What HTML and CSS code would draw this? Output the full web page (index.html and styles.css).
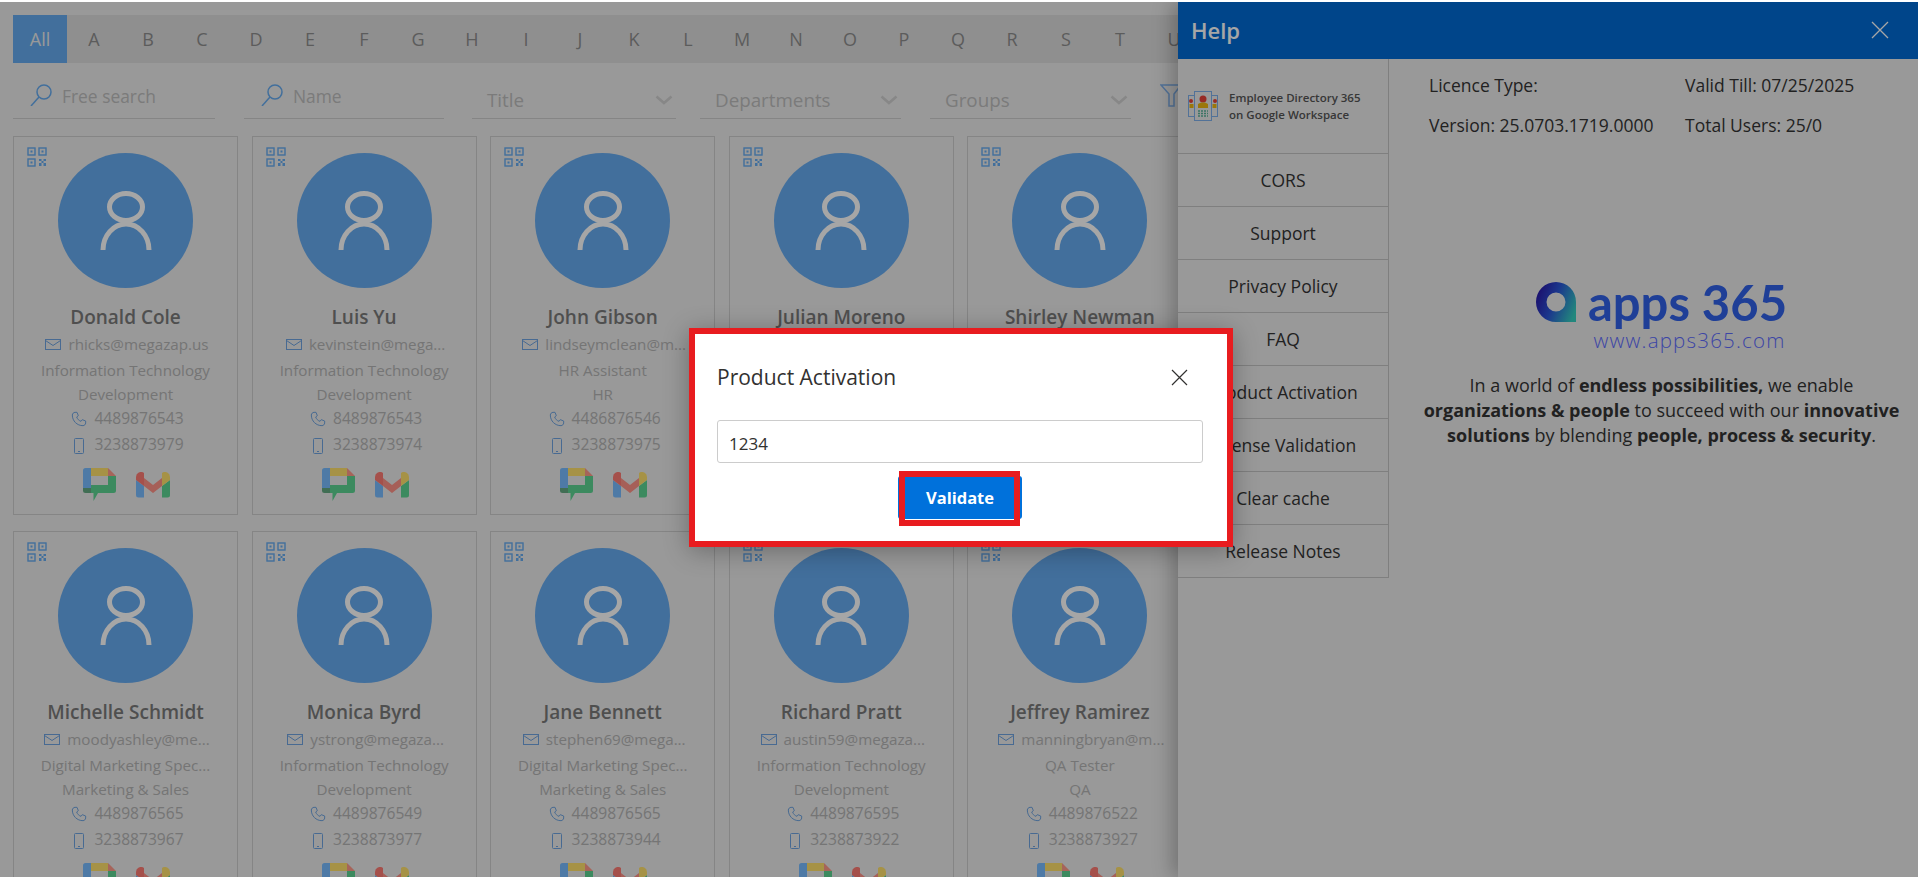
FILE: index.html
```html
<!DOCTYPE html>
<html lang="en">
<head>
  <meta charset="UTF-8">
  <title>Employee Directory 365</title>
  <link rel="stylesheet" href="styles.css">
</head>
<body>
  <svg class="sprites" width="0" height="0">
    <symbol id="i-qr" viewBox="0 0 20 20">
      <g fill="none" stroke="currentColor" stroke-width="1.4">
        <rect x="1" y="1" width="7" height="7"/><rect x="12" y="1" width="7" height="7"/><rect x="1" y="12" width="7" height="7"/>
      </g>
      <g fill="currentColor">
        <rect x="3.5" y="3.5" width="2" height="2"/><rect x="14.5" y="3.5" width="2" height="2"/><rect x="3.5" y="14.5" width="2" height="2"/>
        <path d="M12 12h2.500v2H12zM16.500 12H19v2h-2.500zM14.500 14h2v2h-2zM12 16h2.500v3H12zM16.500 16H19v3h-2.500z"/>
      </g>
    </symbol>
    <symbol id="i-person" viewBox="0 0 52 59">
      <g fill="none" stroke="currentColor" stroke-width="5">
        <ellipse cx="26" cy="16" rx="16.500" ry="13.500"/>
        <path d="M3 59A23 26 0 0 1 49 59"/>
      </g>
    </symbol>
    <symbol id="i-mail" viewBox="0 0 16 11">
      <g fill="none" stroke="currentColor" stroke-width="1">
        <rect x=".5" y=".5" width="15" height="10"/><path d="M.5 1.500 8 6.500l7.500-5"/>
      </g>
    </symbol>
    <symbol id="i-phone" viewBox="0 0 24 24">
      <path fill="none" stroke="currentColor" stroke-width="1.500" d="M6 2h3l2 5-2.500 2c1 3 3.500 5.500 6.500 6.500l2-2.500 5 2v3c0 2-2 4-4 4C9 22 2 15 2 6c0-2 2-4 4-4z"/>
    </symbol>
    <symbol id="i-mobile" viewBox="0 0 10 16">
      <rect x=".5" y=".5" width="9" height="15" rx="1" fill="none" stroke="currentColor"/>
      <rect x="4" y="13" width="2" height="1" fill="currentColor"/>
    </symbol>
    <symbol id="i-chat" viewBox="0 0 33 33">
      <path fill="#78bcff" d="M2.500 0H8v20H0V2.500A2.500 2.500 0 0 1 2.500 0z"/>
      <path fill="#ffe16c" d="M8 0h17v8H8z"/>
      <path fill="#ff9a8a" d="M25 0l8 8h-8z"/>
      <path fill="#5cd492" d="M25 8h8v14.500a2.500 2.500 0 0 1-2.500 2.500H15l-4.500 8v-8H8v-8h17z"/>
      <path fill="#64aa82" d="M0 20h8v5H2.500A2.500 2.500 0 0 1 0 22.500z"/>
    </symbol>
    <symbol id="i-gmail" viewBox="0 0 34 26">
      <path fill="#78bcff" d="M0 8l8 6v11.500H2.500A2.500 2.500 0 0 1 0 23z"/>
      <path fill="#5cd492" d="M26 14l8-6v15a2.500 2.500 0 0 1-2.500 2.500H26z"/>
      <path fill="#ff9287" d="M8 6l9 7 9-7v8l-9 7-9-7z"/>
      <path fill="#fe7b73" d="M0 5a5 5 0 0 1 8-4v13L0 8z"/>
      <path fill="#ffe16c" d="M26 1a5 5 0 0 1 8 4v3l-8 6z"/>
    </symbol>
  </svg>

  <div class="screen">
    <div class="directory">
      <nav class="alpha-bar">
        <a class="alpha-all">All</a><a>A</a><a>B</a><a>C</a><a>D</a><a>E</a><a>F</a><a>G</a><a>H</a><a>I</a><a>J</a><a>K</a><a>L</a><a>M</a><a>N</a><a>O</a><a>P</a><a>Q</a><a>R</a><a>S</a><a>T</a><a>U</a>
      </nav>

      <div class="filters">
        <div class="field search-field">
          <svg class="search-icon" viewBox="0 0 22 22"><circle cx="14" cy="8" r="7" fill="none" stroke="currentColor" stroke-width="1.500"/><path d="M9 13 1 22" stroke="currentColor" stroke-width="1.500"/></svg>
          <span>Free search</span>
        </div>
        <div class="field search-field">
          <svg class="search-icon" viewBox="0 0 22 22"><circle cx="14" cy="8" r="7" fill="none" stroke="currentColor" stroke-width="1.500"/><path d="M9 13 1 22" stroke="currentColor" stroke-width="1.500"/></svg>
          <span>Name</span>
        </div>
        <div class="field select-field"><span>Title</span><svg class="chevron" viewBox="0 0 18 10"><path d="M1.500 1.500 9 8l7.500-6.500" fill="none" stroke="currentColor" stroke-width="2.500"/></svg></div>
        <div class="field select-field"><span>Departments</span><svg class="chevron" viewBox="0 0 18 10"><path d="M1.500 1.500 9 8l7.500-6.500" fill="none" stroke="currentColor" stroke-width="2.500"/></svg></div>
        <div class="field select-field"><span>Groups</span><svg class="chevron" viewBox="0 0 18 10"><path d="M1.500 1.500 9 8l7.500-6.500" fill="none" stroke="currentColor" stroke-width="2.500"/></svg></div>
        <svg class="filter-icon" viewBox="0 0 22 24"><path d="M1 1h20l-7 9v12H9V10z" fill="none" stroke="currentColor" stroke-width="1.500"/></svg>
      </div>

      <div class="cards">
        <article class="card">
          <svg class="qr"><use href="#i-qr"/></svg>
          <div class="avatar"><svg><use href="#i-person"/></svg></div>
          <h3>Donald Cole</h3>
          <p class="email"><svg><use href="#i-mail"/></svg>rhicks@megazap.us</p>
          <p>Information Technology</p>
          <p>Development</p>
          <p class="tel"><svg><use href="#i-phone"/></svg>4489876543</p>
          <p class="tel mobile"><svg><use href="#i-mobile"/></svg>3238873979</p>
          <div class="apps"><svg class="chat"><use href="#i-chat"/></svg><svg class="gmail"><use href="#i-gmail"/></svg></div>
        </article>
        <article class="card">
          <svg class="qr"><use href="#i-qr"/></svg>
          <div class="avatar"><svg><use href="#i-person"/></svg></div>
          <h3>Luis Yu</h3>
          <p class="email"><svg><use href="#i-mail"/></svg>kevinstein@mega...</p>
          <p>Information Technology</p>
          <p>Development</p>
          <p class="tel"><svg><use href="#i-phone"/></svg>8489876543</p>
          <p class="tel mobile"><svg><use href="#i-mobile"/></svg>3238873974</p>
          <div class="apps"><svg class="chat"><use href="#i-chat"/></svg><svg class="gmail"><use href="#i-gmail"/></svg></div>
        </article>
        <article class="card">
          <svg class="qr"><use href="#i-qr"/></svg>
          <div class="avatar"><svg><use href="#i-person"/></svg></div>
          <h3>John Gibson</h3>
          <p class="email"><svg><use href="#i-mail"/></svg>lindseymclean@m...</p>
          <p>HR Assistant</p>
          <p>HR</p>
          <p class="tel"><svg><use href="#i-phone"/></svg>4486876546</p>
          <p class="tel mobile"><svg><use href="#i-mobile"/></svg>3238873975</p>
          <div class="apps"><svg class="chat"><use href="#i-chat"/></svg><svg class="gmail"><use href="#i-gmail"/></svg></div>
        </article>
        <article class="card">
          <svg class="qr"><use href="#i-qr"/></svg>
          <div class="avatar"><svg><use href="#i-person"/></svg></div>
          <h3>Julian Moreno</h3>
        </article>
        <article class="card">
          <svg class="qr"><use href="#i-qr"/></svg>
          <div class="avatar"><svg><use href="#i-person"/></svg></div>
          <h3>Shirley Newman</h3>
        </article>

        <article class="card">
          <svg class="qr"><use href="#i-qr"/></svg>
          <div class="avatar"><svg><use href="#i-person"/></svg></div>
          <h3>Michelle Schmidt</h3>
          <p class="email"><svg><use href="#i-mail"/></svg>moodyashley@me...</p>
          <p>Digital Marketing Spec...</p>
          <p>Marketing &amp; Sales</p>
          <p class="tel"><svg><use href="#i-phone"/></svg>4489876565</p>
          <p class="tel mobile"><svg><use href="#i-mobile"/></svg>3238873967</p>
          <div class="apps"><svg class="chat"><use href="#i-chat"/></svg><svg class="gmail"><use href="#i-gmail"/></svg></div>
        </article>
        <article class="card">
          <svg class="qr"><use href="#i-qr"/></svg>
          <div class="avatar"><svg><use href="#i-person"/></svg></div>
          <h3>Monica Byrd</h3>
          <p class="email"><svg><use href="#i-mail"/></svg>ystrong@megaza...</p>
          <p>Information Technology</p>
          <p>Development</p>
          <p class="tel"><svg><use href="#i-phone"/></svg>4489876549</p>
          <p class="tel mobile"><svg><use href="#i-mobile"/></svg>3238873977</p>
          <div class="apps"><svg class="chat"><use href="#i-chat"/></svg><svg class="gmail"><use href="#i-gmail"/></svg></div>
        </article>
        <article class="card">
          <svg class="qr"><use href="#i-qr"/></svg>
          <div class="avatar"><svg><use href="#i-person"/></svg></div>
          <h3>Jane Bennett</h3>
          <p class="email"><svg><use href="#i-mail"/></svg>stephen69@mega...</p>
          <p>Digital Marketing Spec...</p>
          <p>Marketing &amp; Sales</p>
          <p class="tel"><svg><use href="#i-phone"/></svg>4489876565</p>
          <p class="tel mobile"><svg><use href="#i-mobile"/></svg>3238873944</p>
          <div class="apps"><svg class="chat"><use href="#i-chat"/></svg><svg class="gmail"><use href="#i-gmail"/></svg></div>
        </article>
        <article class="card">
          <svg class="qr"><use href="#i-qr"/></svg>
          <div class="avatar"><svg><use href="#i-person"/></svg></div>
          <h3>Richard Pratt</h3>
          <p class="email"><svg><use href="#i-mail"/></svg>austin59@megaza...</p>
          <p>Information Technology</p>
          <p>Development</p>
          <p class="tel"><svg><use href="#i-phone"/></svg>4489876595</p>
          <p class="tel mobile"><svg><use href="#i-mobile"/></svg>3238873922</p>
          <div class="apps"><svg class="chat"><use href="#i-chat"/></svg><svg class="gmail"><use href="#i-gmail"/></svg></div>
        </article>
        <article class="card">
          <svg class="qr"><use href="#i-qr"/></svg>
          <div class="avatar"><svg><use href="#i-person"/></svg></div>
          <h3>Jeffrey Ramirez</h3>
          <p class="email"><svg><use href="#i-mail"/></svg>manningbryan@m...</p>
          <p>QA Tester</p>
          <p>QA</p>
          <p class="tel"><svg><use href="#i-phone"/></svg>4489876522</p>
          <p class="tel mobile"><svg><use href="#i-mobile"/></svg>3238873927</p>
          <div class="apps"><svg class="chat"><use href="#i-chat"/></svg><svg class="gmail"><use href="#i-gmail"/></svg></div>
        </article>
      </div>
    </div>

    <aside class="help">
      <header class="help-head">
        <span>Help</span>
        <svg viewBox="0 0 18 18"><path d="M1 1l16 16M17 1 1 17" stroke="currentColor" stroke-width="1.300"/></svg>
      </header>
      <div class="help-body">
        <nav class="help-nav">
          <div class="product">
            <svg viewBox="0 0 30 30">
              <g fill="none" stroke="#7fb0ea" stroke-width="1">
                <rect x=".5" y="4.500" width="6" height="21"/><rect x="23.500" y="4.500" width="6" height="21"/>
              </g>
              <rect x="6.500" y=".5" width="17" height="29" fill="#ebebeb" stroke="#7fb0ea"/>
              <circle cx="15" cy="8" r="3.500" fill="#e8433a"/>
              <path d="M10 17v-4l3-1.500h4l3 1.500v4z" fill="#eeb711"/>
              <path d="M10 20h10M10 22.500h10M10 25h10" stroke="#5ab29a" stroke-width="1.500" stroke-dasharray="2 1"/>
              <circle cx="3" cy="10" r="2" fill="#e8433a"/><circle cx="27" cy="10" r="2" fill="#e8433a"/>
              <rect x="1.500" y="13" width="4" height="4" fill="#eeb711"/><rect x="24.500" y="13" width="4" height="4" fill="#eeb711"/>
            </svg>
            <span>Employee Directory 365<br>on Google Workspace</span>
          </div>
          <a>CORS</a>
          <a>Support</a>
          <a>Privacy Policy</a>
          <a>FAQ</a>
          <a>Product Activation</a>
          <a>License Validation</a>
          <a>Clear cache</a>
          <a>Release Notes</a>
        </nav>
        <section class="help-main">
          <div class="licence">
            <span>Licence Type:</span><span>Valid Till: 07/25/2025</span>
            <span>Version: 25.0703.1719.0000</span><span>Total Users: 25/0</span>
          </div>
          <div class="brand">
            <div class="brand-logo">
              <svg viewBox="0 0 40 40">
                <defs>
                  <linearGradient id="mark" x1="0" y1="0.300" x2="1" y2="0.700">
                    <stop offset="0" stop-color="#2a17a8"/><stop offset=".45" stop-color="#2a55d8"/><stop offset="1" stop-color="#35d0c0"/>
                  </linearGradient>
                </defs>
                <path fill="url(#mark)" fill-rule="evenodd" d="M20 0a20 20 0 0 1 20 20v20H20a20 20 0 0 1 0-40zm0 10.500a9.500 9.500 0 1 0 0 19 9.500 9.500 0 0 0 0-19z"/>
              </svg>
              <span>apps 365</span>
            </div>
            <div class="brand-url">www.apps365.com</div>
            <p>In a world of <b>endless possibilities,</b> we enable<br><b>organizations &amp; people</b> to succeed with our <b>innovative</b><br><b>solutions</b> by blending <b>people, process &amp; security</b>.</p>
          </div>
        </section>
      </div>
    </aside>

    <div class="overlay">
      <div class="modal">
        <div class="modal-head">
          <h2>Product Activation</h2>
          <svg viewBox="0 0 17 17"><path d="M1 1l15 15M16 1 1 16" stroke="currentColor" stroke-width="1.200"/></svg>
        </div>
        <input class="modal-input" type="text" value="1234">
        <div class="modal-foot">
          <div class="validate-wrap">
            <button class="validate">Validate</button>
            <span class="annotation"></span>
          </div>
        </div>
      </div>
    </div>
  </div>
</body>
</html>
```

FILE: styles.css
```css
* {
  box-sizing: border-box;
}

body {
  margin: 0;
  background-color: #fff;
  font-family: "Open Sans", "Liberation Sans", sans-serif;
  overflow: hidden;
}

.sprites {
  position: absolute;
}

.screen {
  position: relative;
  height: 875px;
  margin-top: 2px;
  overflow: hidden;
  background-color: #ebebeb;
}

/* directory behind the panel */
.alpha-bar {
  display: flex;
  height: 48px;
  margin: 13px 0 0 13px;
  background-color: #dcdcdc;
}

.alpha-bar a {
  flex: 0 0 54px;
  font-size: 18px;
  line-height: 48px;
  text-align: center;
  color: #8e8e8e;
}

.alpha-bar .alpha-all {
  background-color: #66abf0;
  color: #ebebeb;
}

.filters {
  display: flex;
  gap: 27px;
  height: 56px;
  margin: 0 0 17px 13px;
  padding-top: 10px;
}

.field {
  display: flex;
  flex: none;
  align-items: center;
  width: 202px;
  border-bottom: 1px solid #cdcdcd;
  font-size: 17.400px;
  color: #bdbdbd;
}

.field:nth-child(2) {
  width: 200px;
  margin-left: 2px;
}

.field:nth-child(3) {
  width: 204px;
  margin-left: 1px;
}

.field:nth-child(4) {
  width: 201px;
  margin-left: -3px;
}

.field:nth-child(5) {
  width: 201px;
  margin-left: 2px;
}

.search-field {
  padding: 0 0 0 17px;
}

.search-field span {
  margin-left: 10px;
}

.search-icon {
  width: 22px;
  height: 22px;
  margin-bottom: 2px;
  color: #66abf0;
}

.select-field {
  justify-content: space-between;
  padding: 8px 3px 0 15px;
  font-size: 18.800px;
}

.chevron {
  width: 18px;
  height: 10px;
  color: #cfcfcf;
}

.filter-icon {
  flex: none;
  width: 22px;
  height: 24px;
  margin: 11px 0 0 2px;
  color: #7fb0ea;
}

.cards {
  display: grid;
  grid-template-columns: repeat(5, 225px);
  column-gap: 13.600px;
  row-gap: 15.700px;
  padding-left: 13px;
}

.card {
  position: relative;
  height: 379px;
  padding-top: 16px;
  border: 1px solid #cdcdcd;
  text-align: center;
  font-size: 15.200px;
  color: #b4b4b4;
}

.card p {
  height: 24px;
  margin: 0;
  line-height: 24px;
  white-space: nowrap;
}

.card h3 {
  height: 28px;
  margin: 15px 0 0;
  font-size: 19px;
  font-weight: 600;
  line-height: 28px;
  color: #7a7a7a;
}

.qr {
  position: absolute;
  top: 10px;
  left: 13px;
  width: 20px;
  height: 20px;
  color: #66abf0;
}

.avatar {
  display: flex;
  align-items: flex-start;
  justify-content: center;
  width: 135px;
  height: 135px;
  margin: 0 auto;
  padding-top: 38px;
  border-radius: 50%;
  background-color: #66abf0;
  color: #fff;
}

.avatar svg {
  width: 52px;
  height: 59px;
}

.card .email {
  height: 27px;
  padding-left: 3px;
  line-height: 27px;
}

.email svg {
  width: 16px;
  height: 11px;
  margin-right: 7px;
  color: #6fa4e0;
}

.card .tel {
  padding-left: 4px;
  font-size: 15.600px;
}

.tel svg {
  width: 16px;
  height: 16px;
  margin-right: 7px;
  vertical-align: -3px;
  color: #6fa4e0;
}

.card .mobile {
  margin-top: 2px;
}

.mobile svg {
  width: 10px;
  vertical-align: -4px;
  margin: 0 10px 0 3px;
}

.apps {
  display: flex;
  justify-content: center;
  gap: 20px;
  height: 34px;
  margin-top: 12px;
  padding-left: 2px;
}

.chat {
  width: 33px;
  height: 33px;
}

.gmail {
  width: 34px;
  height: 26px;
  margin-top: 4px;
}

/* help panel */
.help {
  position: absolute;
  top: 0;
  right: 0;
  bottom: 0;
  width: 740px;
  background-color: #ebebeb;
  box-shadow: -6px 0 18px rgba(0, 0, 0, 0.25);
  color: #343434;
}

.help-head {
  display: flex;
  align-items: center;
  justify-content: space-between;
  height: 57px;
  padding: 0 29px 2px 13px;
  background-color: #006ad4;
  font-size: 22px;
  font-weight: 600;
  color: #fff;
}

.help-head svg {
  width: 18px;
  height: 18px;
}

.help-body {
  display: flex;
}

.help-nav {
  width: 211px;
  border-right: 1px solid #c4c4c4;
  font-size: 17.500px;
}

.help-nav .product {
  display: flex;
  align-items: center;
  height: 95px;
  padding-left: 10px;
  border-bottom: 1px solid #c4c4c4;
  font-size: 11.500px;
  font-weight: 600;
  line-height: 17px;
  color: #555;
}

.product svg {
  flex: none;
  width: 30px;
  height: 30px;
  margin-right: 11px;
}

.help-nav a {
  display: block;
  height: 53px;
  border-bottom: 1px solid #c4c4c4;
  line-height: 53px;
  text-align: center;
}

.help-main {
  flex: 1;
  padding: 0 0 0 16px;
}

.licence {
  display: grid;
  grid-template-columns: 256px auto;
  row-gap: 17px;
  margin: 15px 0 0 24px;
  font-size: 17.500px;
  line-height: 23px;
}

.brand {
  display: flex;
  flex-direction: column;
  align-items: center;
  margin-top: 144px;
}

.brand-logo {
  display: flex;
  align-items: center;
  gap: 12px;
  height: 42px;
  font-family: "Lato", sans-serif;
  font-size: 49px;
  font-weight: 700;
  color: #3061e8;
}

.brand-logo svg {
  width: 40px;
  height: 40px;
}

.brand-url {
  align-self: center;
  margin: 3px 0 0 56px;
  font-size: 20.500px;
  font-weight: 300;
  letter-spacing: 1.200px;
  line-height: 28px;
  color: #5c6afe;
}

.brand p {
  margin: 19px 0 0;
  font-size: 18px;
  line-height: 25px;
  white-space: nowrap;
  text-align: center;
}

/* dim layer and dialog */
.overlay {
  position: absolute;
  inset: 0;
  display: flex;
  align-items: center;
  justify-content: center;
  background-color: rgba(0, 0, 0, 0.35);
}

.modal {
  width: 544px;
  height: 219px;
  margin: 0 0 4px 4px;
  padding: 21px 24px 0 22px;
  border: 6px solid #e81c1f;
  background-color: #fff;
  box-shadow: 0 4px 24px rgba(0, 0, 0, 0.3);
  color: #323130;
}

.modal-head {
  display: flex;
  align-items: center;
  justify-content: space-between;
  height: 44px;
  padding-right: 15px;
}

.modal-head h2 {
  margin: 0;
  font-size: 21px;
  font-weight: 500;
}

.modal-head svg {
  width: 17px;
  height: 17px;
}

.modal-input {
  display: block;
  width: 100%;
  height: 43px;
  margin-top: 21px;
  padding: 3px 11px 0;
  border: 1px solid #ccc;
  border-radius: 3px;
  font: inherit;
  font-size: 17px;
  color: #323130;
}

.modal-foot {
  display: flex;
  justify-content: center;
  margin-top: 13px;
}

.validate-wrap {
  position: relative;
}

.validate {
  display: block;
  width: 124px;
  height: 43px;
  border: 0;
  border-radius: 3px;
  background-color: #0071db;
  font: inherit;
  font-size: 16.500px;
  font-weight: 700;
  color: #fff;
}

/* red box drawn over the screenshot */
.annotation {
  position: absolute;
  top: -5px;
  right: 2px;
  bottom: -7px;
  left: 1px;
  border: 6px solid #e81c1f;
}
```
